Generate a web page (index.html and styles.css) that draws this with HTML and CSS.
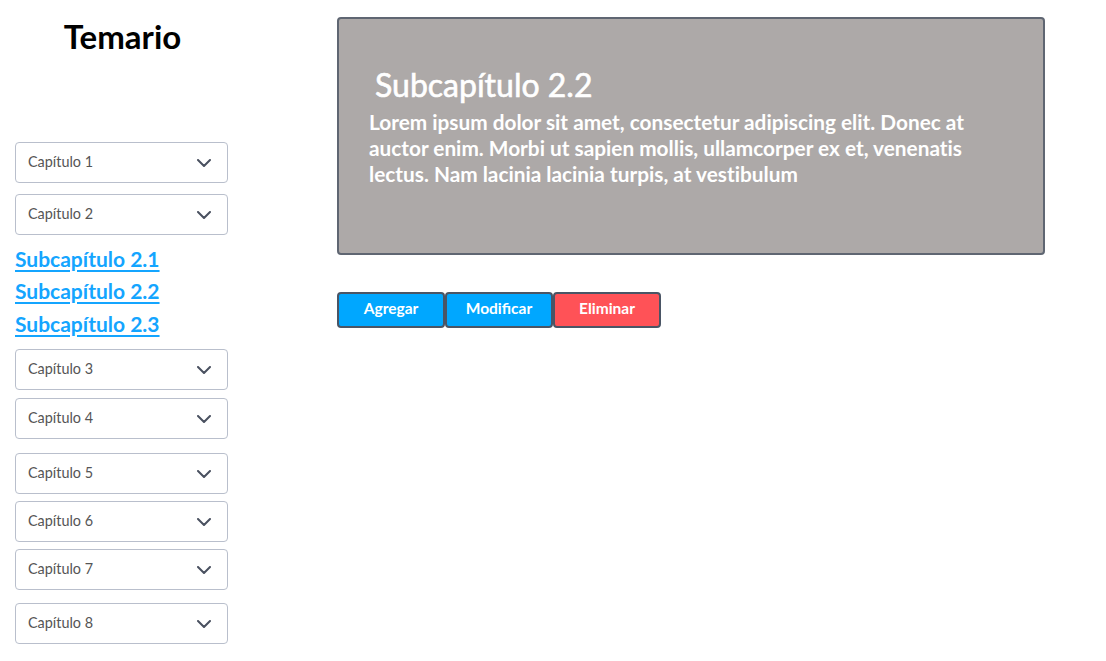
FILE: index.html
```html
<!DOCTYPE html>
<html lang="es">
<head>
<meta charset="utf-8">
<title>Temario</title>
<link rel="stylesheet" href="styles.css">
</head>
<body>
<div class="page">
  <aside class="sidebar">
    <h1 class="title">Temario</h1>
    <div class="select s1"><span>Capítulo 1</span><svg class="chev" viewBox="0 0 14 8" width="14" height="8"><path d="M1 1l6 6 6-6" fill="none" stroke="#4a5160" stroke-width="2" stroke-linecap="round" stroke-linejoin="round"/></svg></div>
    <div class="select s2"><span>Capítulo 2</span><svg class="chev" viewBox="0 0 14 8" width="14" height="8"><path d="M1 1l6 6 6-6" fill="none" stroke="#4a5160" stroke-width="2" stroke-linecap="round" stroke-linejoin="round"/></svg></div>
    <nav class="links">
      <a href="#" class="l1">Subcapítulo 2.1</a>
      <a href="#" class="l2">Subcapítulo 2.2</a>
      <a href="#" class="l3">Subcapítulo 2.3</a>
    </nav>
    <div class="select s3"><span>Capítulo 3</span><svg class="chev" viewBox="0 0 14 8" width="14" height="8"><path d="M1 1l6 6 6-6" fill="none" stroke="#4a5160" stroke-width="2" stroke-linecap="round" stroke-linejoin="round"/></svg></div>
    <div class="select s4"><span>Capítulo 4</span><svg class="chev" viewBox="0 0 14 8" width="14" height="8"><path d="M1 1l6 6 6-6" fill="none" stroke="#4a5160" stroke-width="2" stroke-linecap="round" stroke-linejoin="round"/></svg></div>
    <div class="select s5"><span>Capítulo 5</span><svg class="chev" viewBox="0 0 14 8" width="14" height="8"><path d="M1 1l6 6 6-6" fill="none" stroke="#4a5160" stroke-width="2" stroke-linecap="round" stroke-linejoin="round"/></svg></div>
    <div class="select s6"><span>Capítulo 6</span><svg class="chev" viewBox="0 0 14 8" width="14" height="8"><path d="M1 1l6 6 6-6" fill="none" stroke="#4a5160" stroke-width="2" stroke-linecap="round" stroke-linejoin="round"/></svg></div>
    <div class="select s7"><span>Capítulo 7</span><svg class="chev" viewBox="0 0 14 8" width="14" height="8"><path d="M1 1l6 6 6-6" fill="none" stroke="#4a5160" stroke-width="2" stroke-linecap="round" stroke-linejoin="round"/></svg></div>
    <div class="select s8"><span>Capítulo 8</span><svg class="chev" viewBox="0 0 14 8" width="14" height="8"><path d="M1 1l6 6 6-6" fill="none" stroke="#4a5160" stroke-width="2" stroke-linecap="round" stroke-linejoin="round"/></svg></div>
  </aside>
  <main class="main">
    <section class="card">
      <h2 class="card-title">Subcapítulo 2.2</h2>
      <p class="card-text">Lorem ipsum dolor sit amet, consectetur adipiscing elit. Donec at auctor enim. Morbi ut sapien mollis, ullamcorper ex et, venenatis lectus. Nam lacinia lacinia turpis, at vestibulum</p>
    </section>
    <div class="actions">
      <button class="btn btn-blue">Agregar</button>
      <button class="btn btn-blue">Modificar</button>
      <button class="btn btn-red">Eliminar</button>
    </div>
  </main>
</div>
</body>
</html>
```

FILE: styles.css
```css
html, body {
  margin: 0;
  padding: 0;
  background: #ffffff;
  font-family: Lato, "Liberation Sans", sans-serif;
}

.page {
  display: flex;
  align-items: flex-start;
}

.sidebar {
  width: 245px;
  padding-left: 15px;
  box-sizing: border-box;
  display: flex;
  flex-direction: column;
  align-items: flex-start;
}

.title {
  align-self: stretch;
  margin: 16px 0 0 -15px;
  text-align: center;
  font-size: 33px;
  font-weight: 700;
  line-height: 40px;
  color: #000;
}

.select {
  width: 213px;
  height: 41px;
  box-sizing: border-box;
  border: 1px solid #b9bfcc;
  border-radius: 4px;
  padding: 0 16px 0 12px;
  display: flex;
  align-items: center;
  justify-content: space-between;
  font-size: 14.4px;
  color: #555555;
}

.select span { margin-top: -2px; }

.chev { display: block; margin-top: 1px; }

.s1 { margin-top: 86px; }
.s2 { margin-top: 11px; }
.s3 { margin-top: 12px; }
.s4 { margin-top: 8px; }
.s5 { margin-top: 14px; }
.s6 { margin-top: 7px; }
.s7 { margin-top: 7px; }
.s8 { margin-top: 13px; }

.links {
  display: flex;
  flex-direction: column;
  margin-top: 10px;
}

.links a {
  color: #14a5ff;
  font-size: 21px;
  font-weight: 700;
  line-height: 27px;
  text-decoration: underline;
  text-decoration-thickness: 2px;
  text-underline-offset: 3px;
}

.links .l2 { margin-top: 5px; }
.links .l3 { margin-top: 6px; }

.main {
  padding-left: 92px;
  padding-top: 17px;
}

.card {
  width: 708px;
  height: 238px;
  box-sizing: border-box;
  background: #ada9a8;
  border: 2px solid #5f6672;
  border-radius: 4px;
  padding: 46px 30px 0 30px;
  color: #fff;
}

.card-title {
  margin: 0 0 0 6px;
  font-size: 32px;
  font-weight: 400;
  line-height: 40px;
  -webkit-text-stroke: 0.6px #ffffff;
}

.card-text {
  margin: 4px 0 0 0;
  width: 620px;
  font-size: 20.8px;
  font-weight: 700;
  line-height: 26px;
  font-variant-ligatures: none;
}

.actions {
  display: flex;
  margin-top: 37px;
}

.btn {
  width: 108px;
  height: 36px;
  box-sizing: border-box;
  border: 2px solid #4a5565;
  border-radius: 4px;
  color: #fff;
  font-family: Lato, "Liberation Sans", sans-serif;
  font-size: 15.5px;
  font-weight: 700;
  line-height: 1;
  padding: 0 0 3px 0;
  cursor: pointer;
}

.btn-blue { background: #00a7ff; }
.btn-red { background: #ff5257; }
```
